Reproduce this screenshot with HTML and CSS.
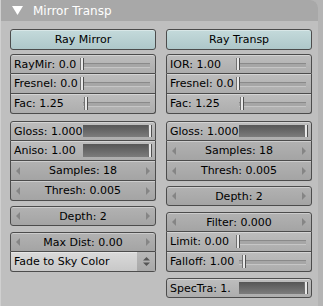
FILE: index.html
```html
<!DOCTYPE html>
<html lang="en">
<head>
    <meta charset="UTF-8">
    <title>Mirror Transp</title>
    <link rel="stylesheet" href="styles.css">
</head>
<body>
    <div class="panel">
        <div class="header">
            <svg class="tri" width="11" height="9" viewBox="0 0 11 9"><polygon points="0,0 11,0 5.5,9" fill="#fff"/></svg>
            <span>Mirror Transp</span>
        </div>

        <div class="body">
            <!-- mirror column -->
            <div class="col">
                <div class="btn toggle">Ray Mirror</div>

                <div class="group g4">
                    <div class="btn slider"><span class="lbl">RayMir: 0.0</span><div class="track"><i class="knob" style="left: 0%"></i></div></div>
                    <div class="btn slider"><span class="lbl">Fresnel: 0.0</span><div class="track"><i class="knob" style="left: 0%"></i></div></div>
                    <div class="btn slider"><span class="lbl">Fac: 1.25</span><div class="track"><i class="knob" style="left: 6.25%"></i></div></div>
                </div>

                <div class="group g7">
                    <div class="btn slider"><span class="lbl">Gloss: 1.000</span><div class="track full"><b class="fill"></b><i class="knob" style="left: 100%"></i></div></div>
                    <div class="btn slider"><span class="lbl">Aniso: 1.00</span><div class="track full"><b class="fill"></b><i class="knob" style="left: 100%"></i></div></div>
                    <div class="btn num"><i class="arr l"></i><span>Samples: 18</span><i class="arr r"></i></div>
                    <div class="btn num"><i class="arr l"></i><span>Thresh: 0.005</span><i class="arr r"></i></div>
                </div>

                <div class="group g5">
                    <div class="btn num"><i class="arr l"></i><span>Depth: 2</span><i class="arr r"></i></div>
                </div>

                <div class="group g6">
                    <div class="btn num"><i class="arr l"></i><span>Max Dist: 0.00</span><i class="arr r"></i></div>
                    <div class="btn menu"><span>Fade to Sky Color</span><span class="updown"><svg width="7" height="9" viewBox="0 0 7 9"><polygon points="3.5,0 7,3.5 0,3.5" fill="#555"/><polygon points="0,5.5 7,5.5 3.5,9" fill="#555"/></svg></span></div>
                </div>
            </div>

            <!-- transparency column -->
            <div class="col">
                <div class="btn toggle">Ray Transp</div>

                <div class="group g4">
                    <div class="btn slider"><span class="lbl">IOR: 1.00</span><div class="track"><i class="knob" style="left: 0%"></i></div></div>
                    <div class="btn slider"><span class="lbl">Fresnel: 0.0</span><div class="track"><i class="knob" style="left: 0%"></i></div></div>
                    <div class="btn slider"><span class="lbl">Fac: 1.25</span><div class="track"><i class="knob" style="left: 6.25%"></i></div></div>
                </div>

                <div class="group g7">
                    <div class="btn slider"><span class="lbl">Gloss: 1.000</span><div class="track full"><b class="fill"></b><i class="knob" style="left: 100%"></i></div></div>
                    <div class="btn num"><i class="arr l"></i><span>Samples: 18</span><i class="arr r"></i></div>
                    <div class="btn num"><i class="arr l"></i><span>Thresh: 0.005</span><i class="arr r"></i></div>
                </div>

                <div class="group g5">
                    <div class="btn num"><i class="arr l"></i><span>Depth: 2</span><i class="arr r"></i></div>
                </div>

                <div class="group g6">
                    <div class="btn num"><i class="arr l"></i><span>Filter: 0.000</span><i class="arr r"></i></div>
                    <div class="btn slider"><span class="lbl">Limit: 0.00</span><div class="track"><i class="knob" style="left: 0%"></i></div></div>
                    <div class="btn slider"><span class="lbl">Falloff: 1.00</span><div class="track"><i class="knob" style="left: 9%"></i></div></div>
                </div>

                <div class="group g6">
                    <div class="btn slider"><span class="lbl">SpecTra: 1.</span><div class="track full"><b class="fill"></b><i class="knob" style="left: 100%"></i></div></div>
                </div>
            </div>
        </div>
    </div>
</body>
</html>
```

FILE: styles.css
```css
body {
    margin: 0;
    background-color: #b4b4b4;
    font-family: "DejaVu Sans", sans-serif;
    font-size: 11px;
    color: #000;
}

.panel {
    width: 318px;
    height: 306px;
    background-color: #bfbfbf;
    border-left: 1px solid #d0d0d0;
    border-top-right-radius: 8px;
    box-sizing: border-box;
}

.header {
    height: 21px;
    background-color: #a8a8a8;
    border-top-right-radius: 8px;
    display: flex;
    align-items: center;
    color: #fff;
    font-size: 12px;
}

.header .tri {
    margin-left: 11px;
    margin-right: 10px;
}

.body {
    display: flex;
    gap: 10px;
    padding: 8px 0 0 9px;
}

.col {
    width: 146px;
    display: flex;
    flex-direction: column;
}

.btn {
    height: 20px;
    box-sizing: border-box;
    border: 1px solid #4c4c4c;
    display: flex;
    align-items: center;
    white-space: nowrap;
    box-shadow: inset 0 1px 0 rgba(255, 255, 255, 0.35);
}

.toggle {
    height: 21px;
    border-radius: 3px;
    justify-content: center;
    background: linear-gradient(#c4dadb, #aec7c9);
}

.group {
    display: flex;
    flex-direction: column;
}

.group .btn + .btn {
    border-top: none;
    height: 20px;
}

.group .btn:first-child {
    border-top-left-radius: 3px;
    border-top-right-radius: 3px;
}

.group .btn:last-child {
    border-bottom-left-radius: 3px;
    border-bottom-right-radius: 3px;
}

.g4 { margin-top: 4px; }
.g5 { margin-top: 5px; }
.g6 { margin-top: 6px; }
.g7 { margin-top: 7px; }

/* sliders */
.slider {
    background: linear-gradient(#bdbdbd, #adadad);
    padding: 0 4px 0 3px;
}

.slider .lbl {
    flex: 0 0 69px;
}

.track {
    flex: 1;
    height: 100%;
    position: relative;
}

.track::before {
    content: "";
    position: absolute;
    left: 0;
    right: 1px;
    top: 8px;
    height: 3px;
    background-color: #a6a6a6;
    border-top: 1px solid #8a8a8a;
    border-bottom: 1px solid #c6c6c6;
}

.track.full::before {
    display: none;
}

.fill {
    position: absolute;
    left: 0;
    right: 0;
    top: 3px;
    bottom: 3px;
    background: linear-gradient(#565656, #7c7c7c);
}

.knob {
    position: absolute;
    top: 3px;
    bottom: 3px;
    width: 2px;
    margin-left: -3px;
    background-color: #e8e8e8;
    border-left: 1px solid #707070;
    border-right: 1px solid #505050;
}

/* number fields */
.num {
    background: linear-gradient(#b2b2b2, #a4a4a4);
    justify-content: space-between;
    padding: 0 5px;
}

.arr {
    width: 0;
    height: 0;
    border-top: 4px solid transparent;
    border-bottom: 4px solid transparent;
}

.arr.l {
    border-right: 4px solid #858585;
}

.arr.r {
    border-left: 4px solid #858585;
}

/* menu */
.menu {
    background: linear-gradient(#dadada, #c8c8c8);
    justify-content: space-between;
    padding-left: 3px;
}

.updown {
    width: 18px;
    height: 100%;
    background: linear-gradient(#b8b8b8, #a8a8a8);
    display: flex;
    align-items: center;
    justify-content: center;
}
```
